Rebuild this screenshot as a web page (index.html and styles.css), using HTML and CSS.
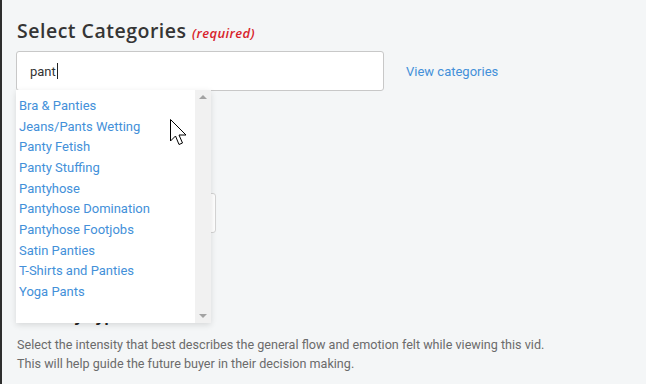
FILE: index.html
```html
<!DOCTYPE html>
<html>
<head>
<meta charset="utf-8">
<link rel="stylesheet" href="styles.css">
</head>
<body>
<div class="page">
  <h2 class="title">Select Categories <span class="req">(required)</span></h2>
  <div class="row">
    <div class="field">
      <div class="input">pant<span class="caret"></span></div>
      <div class="dropdown">
        <ul class="list">
          <li>Bra &amp; Panties</li>
          <li>Jeans/Pants Wetting</li>
          <li>Panty Fetish</li>
          <li>Panty Stuffing</li>
          <li>Pantyhose</li>
          <li>Pantyhose Domination</li>
          <li>Pantyhose Footjobs</li>
          <li>Satin Panties</li>
          <li>T-Shirts and Panties</li>
          <li>Yoga Pants</li>
        </ul>
        <div class="scrollbar">
          <span class="arrow up"></span>
          <span class="arrow down"></span>
        </div>
      </div>
    </div>
    <a class="link">View categories</a>
  </div>
  <div class="sub">
    <div class="input small"></div>
  </div>
  <h3 class="label second">Intensity Type</h3>
  <p class="desc">Select the intensity that best describes the general flow and emotion felt while viewing this vid.<br>This will help guide the future buyer in their decision making.</p>
</div>
<svg class="cursor" width="20" height="30" viewBox="0 0 20 30">
  <path d="M1.5 1.5 L1.5 23 L6.5 18 L10 26.5 L13.5 25 L10 17 L17 17 Z" fill="#fff" stroke="#000" stroke-width="1" stroke-linejoin="miter"/>
</svg>
</body>
</html>
```
FILE: styles.css
```css
html, body {
  margin: 0;
  padding: 0;
  background: #f4f6f7;
}
body {
  width: 646px;
  height: 384px;
  overflow: hidden;
  position: relative;
  font-family: Roboto, "Liberation Sans", sans-serif;
}
.page {
  border-left: 2px solid #2e2e2e;
  padding: 17px 0 0 14px;
  height: 384px;
  box-sizing: border-box;
}
.title {
  margin: 0;
  font-family: "Open Sans", sans-serif;
  font-weight: 600;
  font-size: 19.5px;
  letter-spacing: 0.5px;
  color: #353535;
  line-height: 28px;
  padding-left: 1px;
}
.req {
  font-size: 13px;
  font-style: italic;
  font-weight: 600;
  color: #d8232a;
  letter-spacing: 0.4px;
}
.row {
  display: flex;
  align-items: center;
  margin-top: 4px;
}
.field {
  position: relative;
  width: 368px;
}
.input {
  height: 40px;
  box-sizing: border-box;
  background: #fff;
  border: 1px solid #c8c8c8;
  border-radius: 3px;
  padding: 0 13px;
  display: flex;
  align-items: center;
  font-size: 13px;
  color: #333;
}
.caret {
  display: inline-block;
  width: 1px;
  height: 16px;
  background: #222;
  margin-left: 1px;
}
.link {
  margin-left: 22px;
  font-size: 13px;
  color: #4390d9;
  margin-top: 1px;
}
.dropdown {
  position: absolute;
  left: 0;
  top: 39px;
  width: 195px;
  height: 233px;
  background: #fff;
  display: flex;
  z-index: 5;
  box-shadow: 0 2px 6px rgba(0,0,0,0.12);
}
.list {
  list-style: none;
  margin: 0;
  padding: 6px 0 0 3px;
  flex: 1;
}
.list li {
  font-size: 13px;
  line-height: 20.67px;
  color: #4390d9;
  white-space: nowrap;
}
.scrollbar {
  width: 16px;
  background: #f1f1f1;
  position: relative;
}
.arrow {
  position: absolute;
  left: 4px;
  width: 0;
  height: 0;
  border-left: 4px solid transparent;
  border-right: 4px solid transparent;
}
.arrow.up {
  top: 5px;
  border-bottom: 4px solid #a3a3a3;
}
.arrow.down {
  bottom: 5px;
  border-top: 4px solid #a3a3a3;
}
.sub {
  margin-top: 102px;
}
.label {
  margin: 0;
  font-family: "Open Sans", sans-serif;
  font-weight: 700;
  font-size: 15px;
  color: #222;
  line-height: 22px;
}
.input.small {
  width: 200px;
  border-color: #d4d4d4;
}
.second {
  margin-top: 72px;
}
.desc {
  margin: 8px 0 0 1px;
  font-size: 12.6px;
  line-height: 19px;
  color: #6b6b6b;
}
.cursor {
  position: absolute;
  left: 169px;
  top: 118px;
  z-index: 10;
}
```
